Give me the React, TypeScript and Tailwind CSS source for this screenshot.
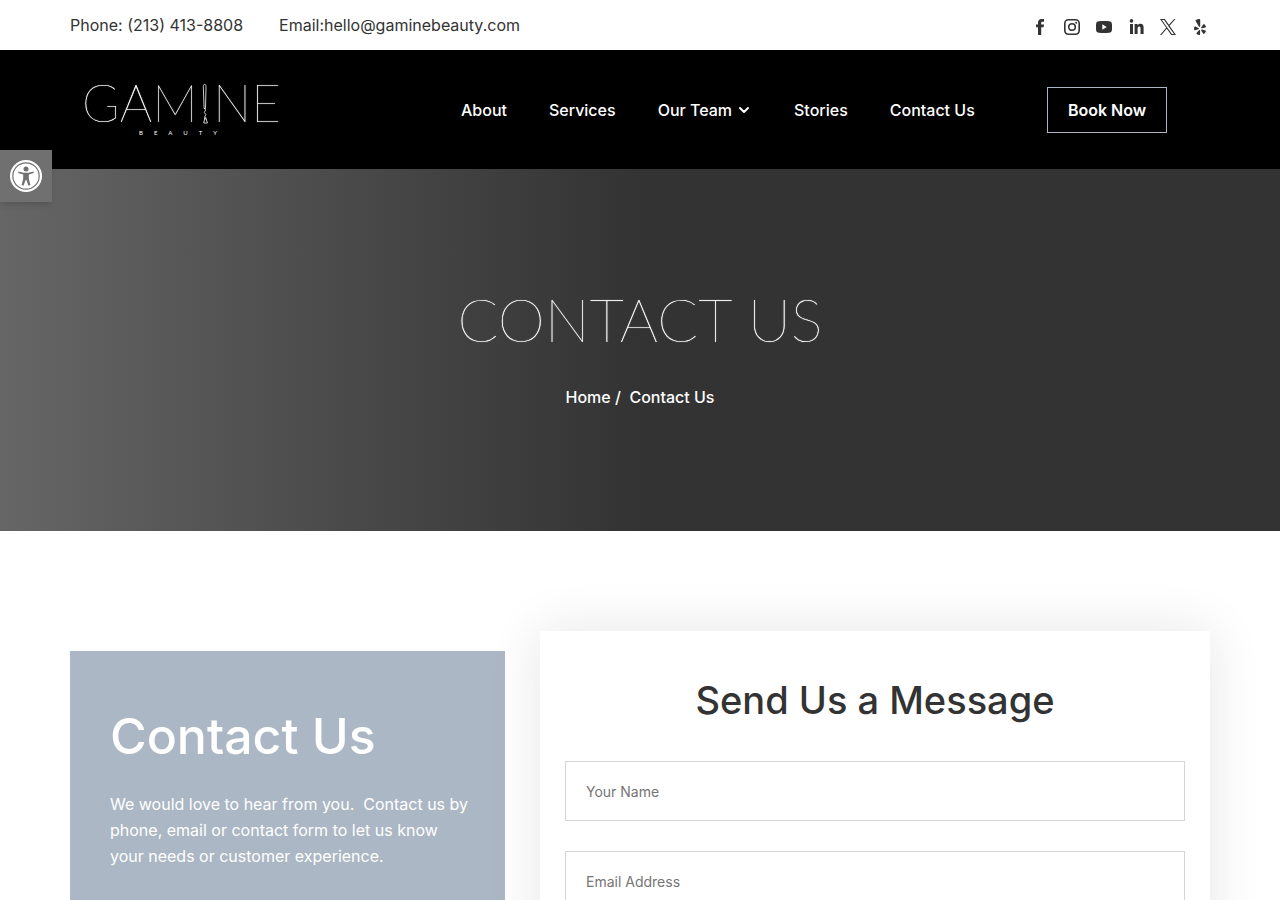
import { ReactElement } from 'react';
import { FaYelp } from 'react-icons/fa';
import { ChevronDown } from 'lucide-react';

type FieldProps = {
  type: 'text' | 'email';
  name: string;
  label: string;
};

function FacebookIcon(): ReactElement {
  return (
    <svg viewBox="0 0 16 16" className="size-4" fill="currentColor" aria-hidden>
      <path d="M12 .1v2.700h-1.500c-1 0-1.300.5-1.300 1.200V5.400H12l-.4 2.900H9.200V16H6V8.300H4V5.400h2V3.600C6 1.300 7.400 0 9.600 0c1 0 1.900.1 2.400.1z" />
    </svg>
  );
}

function InstagramIcon(): ReactElement {
  return (
    <svg viewBox="0 0 16 16" className="size-4" fill="none" stroke="currentColor" strokeWidth="1.6" aria-hidden>
      <rect x="0.8" y="0.8" width="14.4" height="14.4" rx="3.6" />
      <circle cx="8" cy="8" r="3.3" />
      <circle cx="12.2" cy="3.8" r="1" fill="currentColor" stroke="none" />
    </svg>
  );
}

function YoutubeIcon(): ReactElement {
  return (
    <svg viewBox="0 0 16 16" className="size-4" fill="currentColor" aria-hidden>
      <path
        fillRule="evenodd"
        d="M3 2.200c3-.3 7-.3 10 0 1.900.1 2.700 1 2.900 2.800.2 2 .2 4 0 6-.2 1.800-1 2.700-2.900 2.800-3 .3-7 .3-10 0C1.100 13.700.3 12.800.1 11c-.2-2-.2-4 0-6C.3 3.200 1.100 2.300 3 2.200zM6.300 5.200v5.500l4.400-2.700z"
      />
    </svg>
  );
}

function LinkedinIcon(): ReactElement {
  return (
    <svg viewBox="0 0 16 16" className="size-4" fill="currentColor" aria-hidden>
      <circle cx="3.500" cy="1.900" r="1.800" />
      <path d="M2 5h3v10H2zM6.600 5h3v1.400c.5-.9 1.500-1.600 2.900-1.600 2.400 0 3.100 1.600 3.100 4V15h-3.100V9.700c0-1.300-.2-2.200-1.300-2.200s-1.600.8-1.600 2.200V15h-3z" />
    </svg>
  );
}

function XIcon(): ReactElement {
  return (
    <svg viewBox="0 0 24 24" className="size-4" fill="currentColor" aria-hidden>
      <path d="M14.3 10.2 23.2 0h-2.1l-7.7 8.8L7.200 0H0l9.300 13.300L0 24h2.100l8.100-9.300L16.800 24H24l-9.700-13.800Zm-2.900 3.300-.9-1.300L2.900 1.600h3.200l6.100 8.600.9 1.300 7.900 11h-3.200l-6.400-9Z" />
    </svg>
  );
}

const socials = [
  { name: 'Facebook', icon: <FacebookIcon /> },
  { name: 'Instagram', icon: <InstagramIcon /> },
  { name: 'YouTube', icon: <YoutubeIcon /> },
  { name: 'LinkedIn', icon: <LinkedinIcon /> },
  { name: 'X', icon: <XIcon /> },
  { name: 'Yelp', icon: <FaYelp className="size-4" /> },
];

const links = ['About', 'Services', 'Our Team', 'Stories', 'Contact Us'];

function TopBar(): ReactElement {
  return (
    <div className="mx-auto flex h-[50px] w-full max-w-[1140px] items-center justify-between text-[#333]">
      <div className="flex gap-9">
        <a href="#phone">Phone: (213) 413-8808</a>
        <a href="#email">Email:hello@gaminebeauty.com</a>
      </div>
      <ul className="flex gap-4 pt-1 pr-0.5">
        {socials.map(({ name, icon }) => (
          <li key={name}>
            <a href="#social" aria-label={name} className="block">
              {icon}
            </a>
          </li>
        ))}
      </ul>
    </div>
  );
}

function Logo(): ReactElement {
  return (
    <svg viewBox="0 0 190 54" className="h-[54px] w-[190px] overflow-visible" fill="white" role="img" aria-label="Gamine Beauty">
      <g fontFamily="Lato" fontWeight="100" fontSize="51" className="[text-shadow:0_0_1px_white]">
        <text x="-3" y="39">
          GAM
        </text>
        <text x="128" y="39">
          NE
        </text>
      </g>
      {/* brush standing in for the I */}
      <g fill="none" stroke="white" strokeWidth="0.8">
        <path d="M118.300 3.500c0-3 2.700-3 2.700 0l-.5 22h-1.400z" />
        <path d="M119.200 25l1.400 2-1.300 2.500 1.500 2-1.300 3 .8 2M120.600 34l1.800 6h-3.700l1.200-5" />
      </g>
      <text x="54" y="52" fontFamily="Lato" fontWeight="400" fontSize="6" letterSpacing="11">
        BEAUTY
      </text>
    </svg>
  );
}

function Header(): ReactElement {
  return (
    <header className="bg-black text-white">
      <div className="mx-auto flex h-[119px] w-full max-w-[1140px] items-center font-medium">
        <a href="#home" className="w-[391px] pl-[15px]">
          <Logo />
        </a>
        <nav className="flex gap-[42px]">
          {links.map((link) => (
            <a key={link} href="#page" className="flex items-center gap-1 whitespace-nowrap">
              {link}
              {link === 'Our Team' && <ChevronDown className="size-4" strokeWidth={3} aria-hidden />}
            </a>
          ))}
        </nav>
        <button type="button" className="mr-[43px] ml-auto h-[46px] w-[120px] border border-[#abb7c4] font-semibold">
          Book Now
        </button>
      </div>
    </header>
  );
}

function Hero(): ReactElement {
  return (
    <section className="bg-linear-to-r from-[#666] to-[#333] to-50% pt-[113px] pb-[121px] text-center text-white">
      <h1 className="font-[Lato] text-[60px] leading-[74px] font-thin [text-shadow:0_0_1px_white]">CONTACT US</h1>
      <p className="mt-7 leading-[26px] font-medium">
        <a href="#home">Home</a> /&nbsp; Contact Us
      </p>
    </section>
  );
}

function Field({ type, name, label }: FieldProps): ReactElement {
  return (
    <input
      type={type}
      name={name}
      aria-label={label}
      placeholder={label}
      className="block h-[60px] w-full border border-[#d5d5d5] px-5 text-sm placeholder:text-[#757575]"
    />
  );
}

function AccessibilityButton(): ReactElement {
  return (
    <button
      type="button"
      aria-label="Open accessibility toolbar"
      className="absolute top-[150px] left-0 flex size-[52px] items-center justify-center bg-[#707070] shadow-md"
    >
      <svg viewBox="0 0 32 32" className="size-8" aria-hidden>
        <circle cx="16" cy="16" r="16" fill="white" />
        <circle cx="16" cy="16" r="13.200" fill="none" stroke="#707070" strokeWidth="1.200" />
        <circle cx="16" cy="9" r="2.500" fill="#707070" />
        <path
          d="M8.500 11.500l5 1.200h5l5-1.200.3 1.500-5 1.600v4.200l1.600 6.300-1.900.6-2.200-6h-.6l-2.200 6-1.900-.6 1.600-6.300v-4.200l-5-1.600z"
          fill="#707070"
        />
      </svg>
    </button>
  );
}

export default function App(): ReactElement {
  return (
    <div className="relative bg-white font-[Inter,sans-serif] text-base">
      <TopBar />
      <Header />
      <Hero />
      <main className="mx-auto grid w-full max-w-[1140px] grid-cols-[435fr_670fr] gap-[35px] py-[100px]">
        <section className="mt-5 bg-[#abb7c4] pt-[50px] pr-[34px] pb-10 pl-10 text-white">
          <h2 className="text-[50px] leading-[70px] font-medium">Contact Us</h2>
          <p className="mt-5 leading-[26px]">
            We would love to hear from you.&nbsp; Contact us by phone, email or contact form to let us know your needs or
            customer experience.
          </p>
        </section>
        <section className="bg-white px-[25px] pt-10 pb-[50px] shadow-[0_0_50px_rgba(0,30,20,0.11)]">
          <h2 className="text-center text-[38px] leading-[58px] font-medium text-[#333]">Send Us a Message</h2>
          <form className="mt-8 flex flex-col gap-[30px]">
            <Field type="text" name="name" label="Your Name" />
            <Field type="email" name="email" label="Email Address" />
          </form>
        </section>
      </main>
      <AccessibilityButton />
    </div>
  );
}
